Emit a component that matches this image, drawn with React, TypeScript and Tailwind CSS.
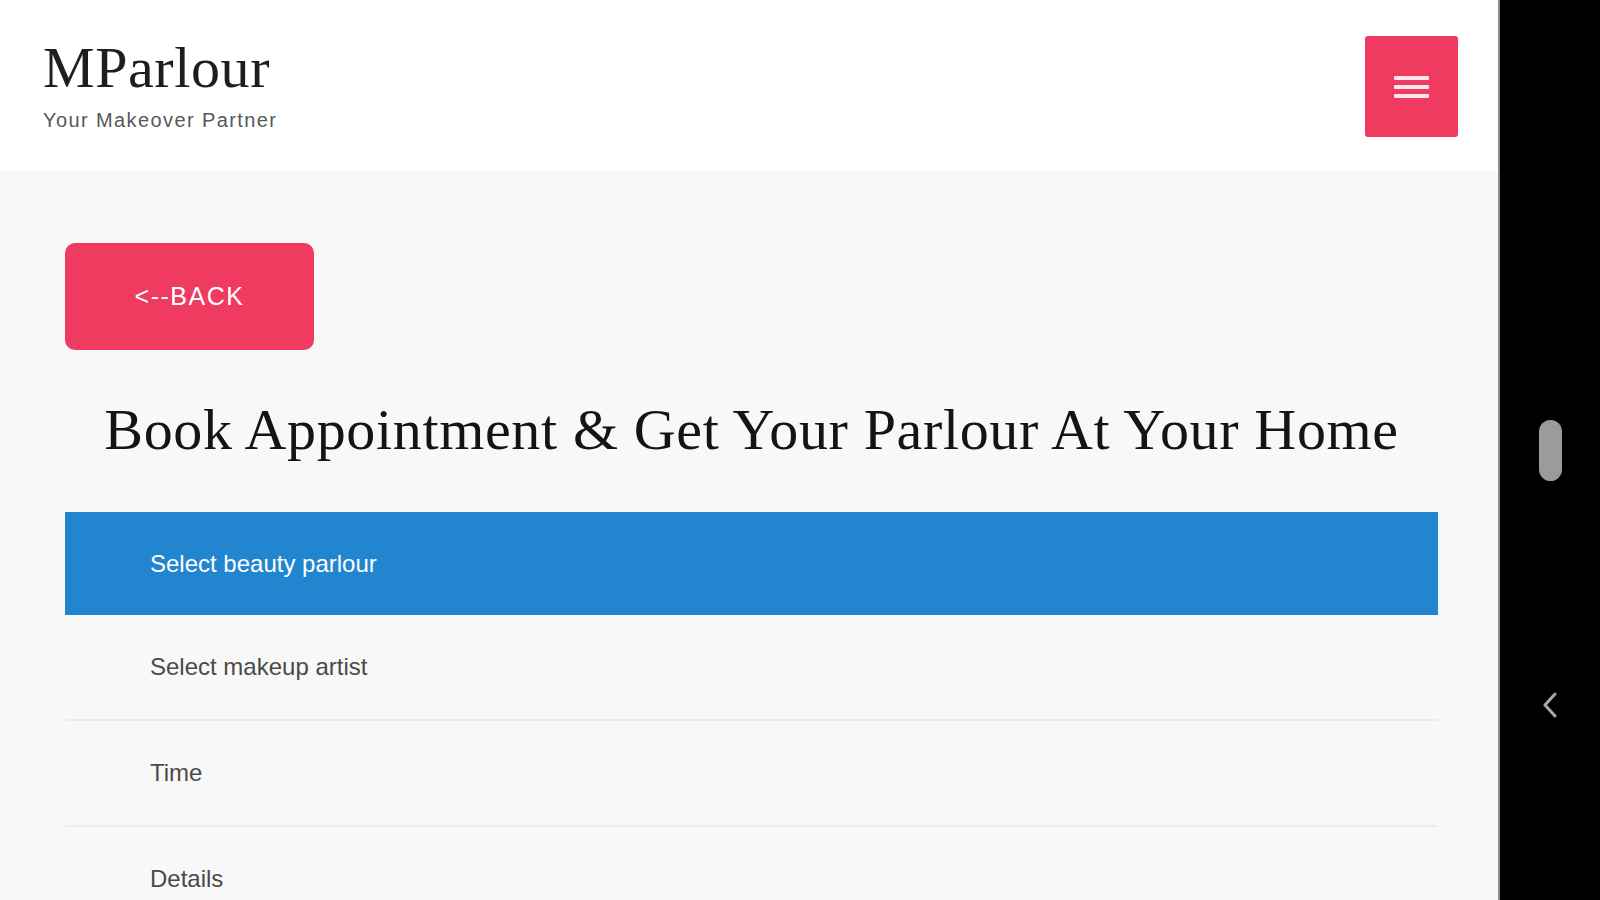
// MParlour booking page
// Header with logo + menu, back button, heading and the step list

const steps = [
    { label: 'Select beauty parlour', active: true },
    { label: 'Select makeup artist', active: false },
    { label: 'Time', active: false },
    { label: 'Details', active: false },
];

export default function App() {
    return (
        <div className="flex h-[900px] w-[1600px] overflow-hidden bg-black font-['Liberation_Sans',Arial,sans-serif]">
            {/* Page */}
            <div className="flex w-[1498px] flex-col bg-[#f8f8f8]">
                {/* Header */}
                <div className="flex h-[171px] shrink-0 items-start justify-between bg-white pl-[43px] pr-[40px]">
                    <div className="pt-[39px]">
                        <div className="font-['Liberation_Serif','Times_New_Roman',serif] text-[58px] leading-none tracking-[0.6px] text-[#1e1e1e]">
                            MParlour
                        </div>
                        <div className="mt-[13px] text-[20px] leading-none tracking-[1.4px] text-[#585858]">
                            Your Makeover Partner
                        </div>
                    </div>
                    <button className="mt-[36px] flex h-[101px] w-[93px] flex-col items-center justify-center gap-[5px] rounded-[3px] bg-[#ee3b5f]">
                        <span className="block h-[4px] w-[35px] rounded-[1px] bg-[#fde7ec]" />
                        <span className="block h-[4px] w-[35px] rounded-[1px] bg-[#fde7ec]" />
                        <span className="block h-[4px] w-[35px] rounded-[1px] bg-[#fde7ec]" />
                    </button>
                </div>

                {/* Content */}
                <div className="flex-1 pl-[65px] pr-[60px] pt-[72px]">
                    <button className="flex h-[107px] w-[249px] items-center justify-center rounded-[10px] bg-[#ee3b5f] text-[25px] tracking-[1.5px] text-white">
                        {'<--BACK'}
                    </button>

                    <h1 className="mt-[51px] text-center font-['Liberation_Serif','Times_New_Roman',serif] text-[58px] leading-none tracking-[0.65px] text-[#141414]">
                        Book Appointment &amp; Get Your Parlour At Your Home
                    </h1>

                    <div className="mt-[53px]">
                        {steps.map((step) =>
                            step.active ? (
                                <div
                                    key={step.label}
                                    className="flex h-[103px] items-center bg-[#2185d0] pl-[85px] text-[24px] text-white"
                                >
                                    {step.label}
                                </div>
                            ) : (
                                <div
                                    key={step.label}
                                    className="flex h-[106px] items-center border-b-2 border-[#ececec] pl-[85px] text-[24px] text-[#4a4a4a]"
                                >
                                    {step.label}
                                </div>
                            )
                        )}
                    </div>
                </div>
            </div>

            {/* System side bar */}
            <div className="flex w-[102px] flex-col items-center border-l-2 border-[#8c8c8c] bg-black pt-[420px]">
                <div className="h-[61px] w-[23px] rounded-full bg-[#9b9b9b]" />
                <svg width="16" height="26" viewBox="0 0 16 26" className="mt-[211px]">
                    <polyline points="13,2 3,13 13,24" fill="none" stroke="#a8a8a8" strokeWidth="3" strokeLinecap="round" strokeLinejoin="round" />
                </svg>
            </div>
        </div>
    );
}
